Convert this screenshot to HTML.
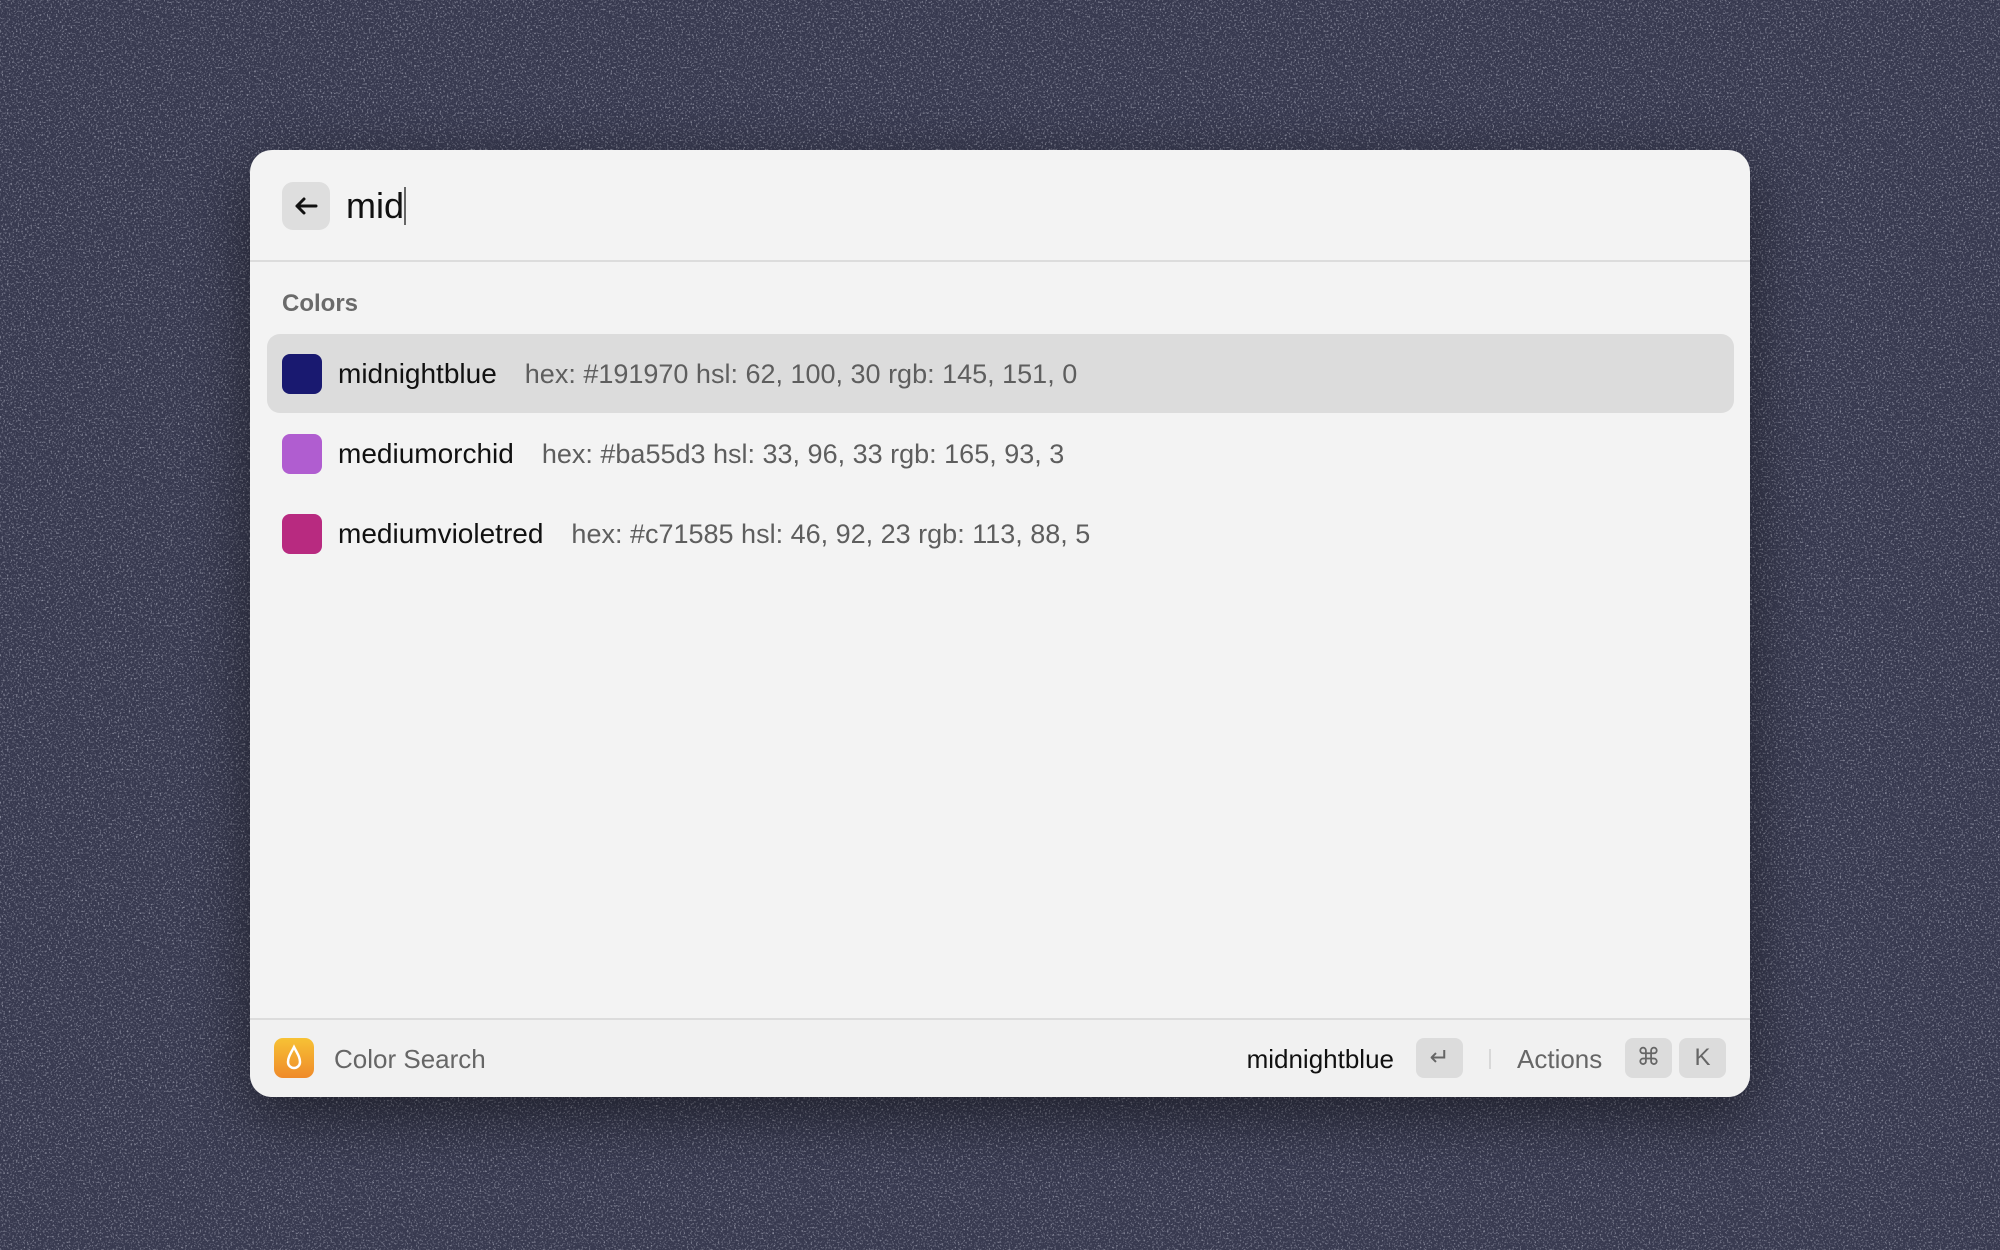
<!DOCTYPE html>
<html><head><meta charset="utf-8"><style>
*{margin:0;padding:0;box-sizing:border-box}
body{width:2000px;height:1250px;overflow:hidden;background:#3b3d52;font-family:"Liberation Sans",sans-serif;position:relative}
.bg{position:absolute;inset:0}
.win{position:absolute;left:250px;top:150px;width:1500px;height:947px;background:#f3f3f3;border-radius:22px;box-shadow:0 20px 60px rgba(0,0,0,.45);overflow:hidden}
.back{position:absolute;left:32px;top:32px;width:48px;height:48px;border-radius:11px;background:#dedede}
.q{position:absolute;left:96px;top:34px;font-size:36px;color:#111;line-height:44px}
.caret{display:inline-block;width:2px;height:38px;background:#666;vertical-align:-7px;margin-left:0}
.div1{position:absolute;left:0;right:0;top:110px;height:2px;background:#dcdcdc}
.sec{position:absolute;left:32px;top:140px;font-size:24px;color:#6a6a6a;font-weight:bold;line-height:28px}
.sel{position:absolute;left:17px;top:184px;width:1467px;height:79px;border-radius:13px;background:#dcdcdc}
.row{position:absolute;left:32px;height:40px;display:flex;align-items:center;font-size:27px}
.sw{width:40px;height:40px;border-radius:8px;margin-right:16px}
.nm{color:#111;font-size:28px}
.dt{color:#5e5e5e;margin-left:28px}
.div2{position:absolute;left:0;right:0;top:868px;height:2px;background:#dcdcdc}
.foot{position:absolute;left:0;right:0;top:870px;height:77px;background:#f1f1f1}
.ic{position:absolute;left:24px;top:18px;width:40px;height:40px;border-radius:9px;background:linear-gradient(#f7c235,#ef8a2a)}
.ft{position:absolute;top:24px;font-size:26px;line-height:30px}
.key{position:absolute;top:18px;width:47px;height:40px;border-radius:8px;background:#dcdcdc;color:#666;font-size:24px;text-align:center;line-height:40px}
</style></head><body>
<svg class="bg" width="2000" height="1250"><filter id="n"><feTurbulence type="fractalNoise" baseFrequency="0.55" numOctaves="2" seed="3"/><feColorMatrix values="0 0 0 0 0.55 0 0 0 0 0.56 0 0 0 0 0.65 0 0 0 3 -1.6"/></filter><rect width="2000" height="1250" fill="#383a50"/><rect width="2000" height="1250" filter="url(#n)" opacity="0.7"/></svg>
<div class="win">
 <div class="back"><svg width="48" height="48" viewBox="0 0 48 48"><path d="M34 24H15M22 17l-7 7 7 7" stroke="#111" stroke-width="3" fill="none" stroke-linecap="round" stroke-linejoin="round"/></svg></div>
 <div class="q">mid<span class="caret"></span></div>
 <div class="div1"></div>
 <div class="sec">Colors</div>
 <div class="sel"></div>
 <div class="row" style="top:204px"><div class="sw" style="background:#191970"></div><span class="nm">midnightblue</span><span class="dt">hex: #191970 hsl: 62, 100, 30 rgb: 145, 151, 0</span></div>
 <div class="row" style="top:284px"><div class="sw" style="background:#b05dd0"></div><span class="nm">mediumorchid</span><span class="dt">hex: #ba55d3 hsl: 33, 96, 33 rgb: 165, 93, 3</span></div>
 <div class="row" style="top:364px"><div class="sw" style="background:#b82a80"></div><span class="nm">mediumvioletred</span><span class="dt">hex: #c71585 hsl: 46, 92, 23 rgb: 113, 88, 5</span></div>
 <div class="div2"></div>
 <div class="foot">
  <div class="ic"><svg width="40" height="40" viewBox="0 0 40 40"><path d="M20 9C17 15 14 19 14 24a6 6 0 0 0 12 0c0-5-3-9-6-15z" stroke="#fff" stroke-width="2.5" fill="none"/></svg></div>
  <div class="ft" style="left:84px;color:#666">Color Search</div>
  <div class="ft" style="right:356px;color:#111">midnightblue</div>
  <div class="key" style="left:1166px">↵</div>
  <div style="position:absolute;left:1239px;top:29px;width:2px;height:20px;background:#d8d8d8"></div>
  <div class="ft" style="left:1267px;color:#666">Actions</div>
  <div class="key" style="left:1375px">⌘</div>
  <div class="key" style="left:1429px">K</div>
 </div>
</div>
</body></html>
